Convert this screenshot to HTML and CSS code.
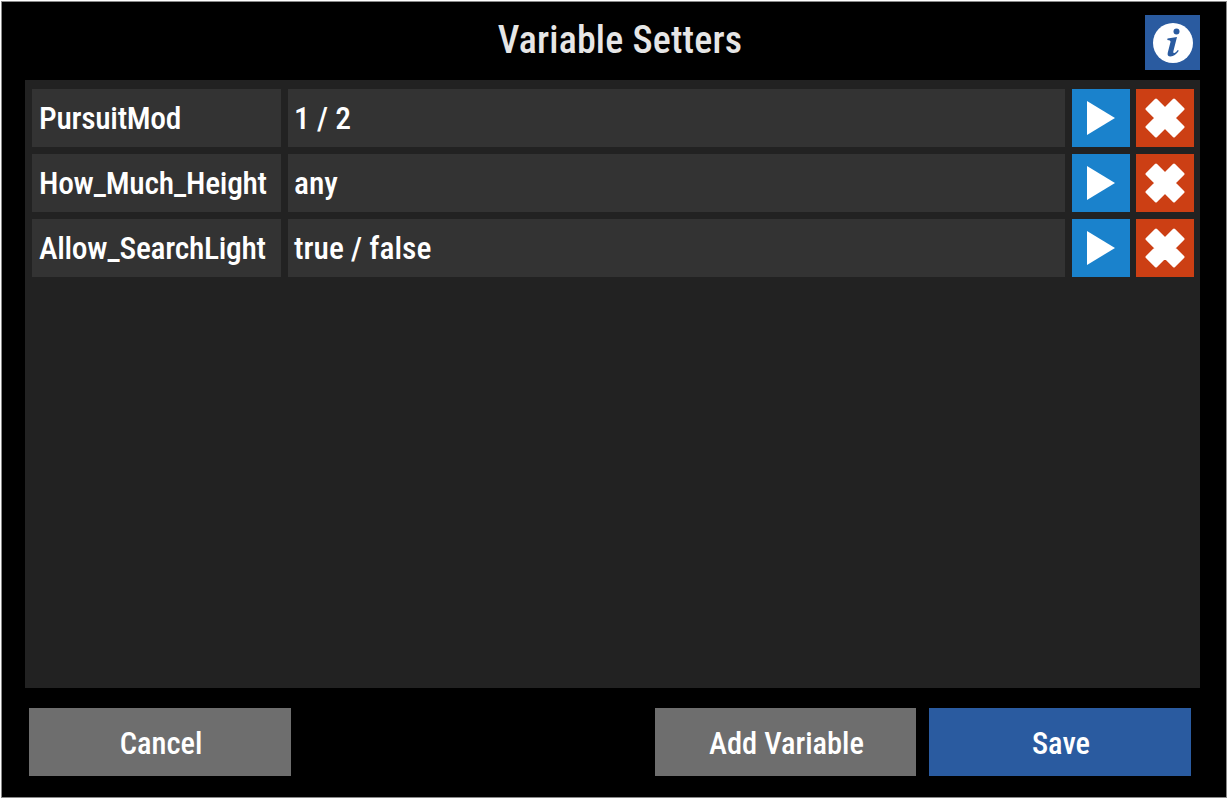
FILE: index.html
```html
<!DOCTYPE html>
<html lang="en">
  <head>
    <meta charset="UTF-8" />
    <meta name="viewport" content="width=device-width, initial-scale=1" />
    <title>Variable Setters</title>
    <link rel="stylesheet" href="styles.css">
  </head>
  <body>
    <div class="dialog">
      <div class="dialog-header">
        <div class="dialog-title">Variable Setters</div>
        <button class="info-btn">
          <svg width="40" height="40" viewBox="0 0 40 40">
            <circle cx="20" cy="20" r="20" fill="#fff" />
            <circle cx="23.5" cy="8.5" r="3" fill="#2a5ba0" />
            <path d="M14.5 15.5 L24 14 L20.3 28.5 Q20 30.5 21.5 30 Q23 29.3 24.8 27 L25.8 27.8 Q22 33.5 17.5 33.5 Q13.8 33.5 14.8 29.5 L17.5 19 Q17.8 17.2 14.3 17 Z" fill="#2a5ba0" />
          </svg>
        </button>
      </div>

      <div class="var-list">
        <div class="var-row">
          <div class="var-cell var-name">PursuitMod</div>
          <div class="var-cell var-value">1 / 2</div>
          <button class="icon-btn play-btn">
            <svg width="28" height="34" viewBox="0 0 28 34"><path d="M0 0 L28 17 L0 34 Z" fill="#fff" /></svg>
          </button>
          <button class="icon-btn del-btn">
            <svg width="40" height="40" viewBox="0 0 40 40"><path d="M11 2 L20 11 L29 2 L38 11 L29 20 L38 29 L29 38 L20 29 L11 38 L2 29 L11 20 L2 11 Z" fill="#fff" stroke="#fff" stroke-width="3" stroke-linejoin="round" /></svg>
          </button>
        </div>
        <div class="var-row">
          <div class="var-cell var-name">How_Much_Height</div>
          <div class="var-cell var-value">any</div>
          <button class="icon-btn play-btn">
            <svg width="28" height="34" viewBox="0 0 28 34"><path d="M0 0 L28 17 L0 34 Z" fill="#fff" /></svg>
          </button>
          <button class="icon-btn del-btn">
            <svg width="40" height="40" viewBox="0 0 40 40"><path d="M11 2 L20 11 L29 2 L38 11 L29 20 L38 29 L29 38 L20 29 L11 38 L2 29 L11 20 L2 11 Z" fill="#fff" stroke="#fff" stroke-width="3" stroke-linejoin="round" /></svg>
          </button>
        </div>
        <div class="var-row">
          <div class="var-cell var-name">Allow_SearchLight</div>
          <div class="var-cell var-value">true / false</div>
          <button class="icon-btn play-btn">
            <svg width="28" height="34" viewBox="0 0 28 34"><path d="M0 0 L28 17 L0 34 Z" fill="#fff" /></svg>
          </button>
          <button class="icon-btn del-btn">
            <svg width="40" height="40" viewBox="0 0 40 40"><path d="M11 2 L20 11 L29 2 L38 11 L29 20 L38 29 L29 38 L20 29 L11 38 L2 29 L11 20 L2 11 Z" fill="#fff" stroke="#fff" stroke-width="3" stroke-linejoin="round" /></svg>
          </button>
        </div>
      </div>

      <div class="dialog-footer">
        <button class="footer-btn">Cancel</button>
        <div class="footer-right">
          <button class="footer-btn">Add Variable</button>
          <button class="footer-btn save-btn">Save</button>
        </div>
      </div>
    </div>
  </body>
</html>
```

FILE: styles.css
```css
html,
body {
  height: 100%;
}

body {
  margin: 0;
  padding: 1px 1px 2px 1px;
  box-sizing: border-box;
  background-color: #fff;
  font-family: "Roboto", sans-serif;
  font-stretch: condensed;
  color: #fff;
}

button {
  border: none;
  padding: 0;
  font-family: inherit;
  font-stretch: inherit;
  color: inherit;
}

.dialog {
  height: 100%;
  box-sizing: border-box;
  background-color: #000;
  border: 1px solid #8a8a8a;
  display: flex;
  flex-direction: column;
  padding: 0 26px 0 23px;
}

.dialog-header {
  height: 78px;
  flex: none;
  box-sizing: border-box;
  padding: 0 0 3px 15px;
  display: flex;
  align-items: center;
  justify-content: center;
  position: relative;
}

.dialog-title {
  font-size: 38px;
  font-weight: 500;
  letter-spacing: 0.2px;
  color: #e6e6e6;
}

.info-btn {
  position: absolute;
  right: 0;
  top: 13px;
  width: 55px;
  height: 55px;
  background-color: #2a5ba0;
  display: flex;
  align-items: center;
  justify-content: center;
}

.var-list {
  flex: 1;
  background-color: #222;
  padding: 9px 6px 0 7px;
  display: flex;
  flex-direction: column;
  gap: 7px;
}

.var-row {
  display: flex;
  height: 58px;
  gap: 7px;
}

.var-cell {
  background-color: #333;
  font-size: 31.5px;
  font-weight: 500;
  padding-left: 7px;
  display: flex;
  align-items: center;
}

.var-name {
  width: 242px;
  flex: none;
  letter-spacing: -0.3px;
}

.var-value {
  flex: 1;
  padding-left: 6px;
}

.icon-btn {
  width: 58px;
  flex: none;
  display: flex;
  align-items: center;
  justify-content: center;
}

.play-btn {
  background-color: #1a82cc;
}

.del-btn {
  background-color: #cc3f14;
  margin-left: -1px;
}

.dialog-footer {
  height: 109px;
  flex: none;
  box-sizing: border-box;
  padding: 20px 9px 21px 4px;
  display: flex;
  justify-content: space-between;
}

.footer-right {
  display: flex;
  gap: 13px;
}

.footer-btn {
  width: 262px;
  font-size: 30.5px;
  font-weight: 500;
  padding: 3px 0 0 2px;
  background-color: #6e6e6e;
}

.footer-right .footer-btn:first-child {
  width: 261px;
}

.save-btn {
  background-color: #2a5ba0;
}
```
